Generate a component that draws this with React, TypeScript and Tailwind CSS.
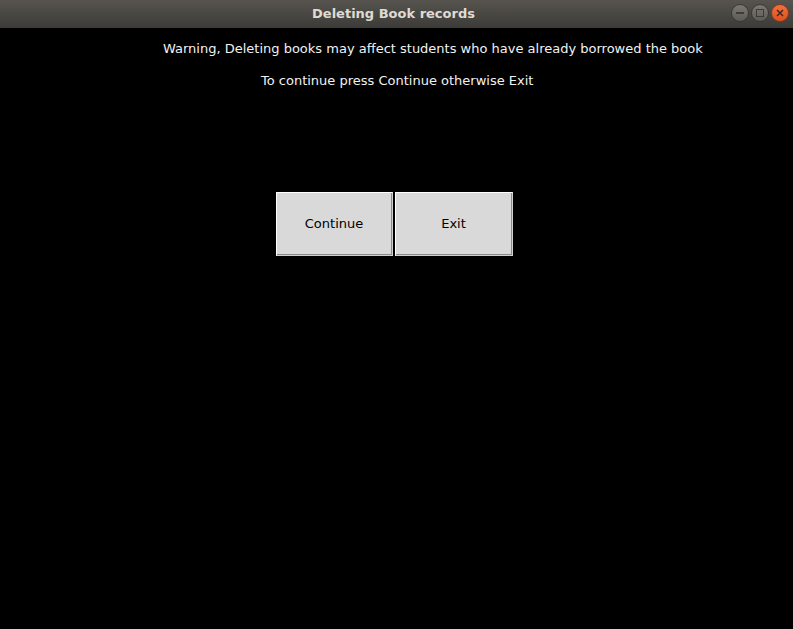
export default function App() {
  return (
    <div className="w-[793px] h-[629px] bg-black flex flex-col overflow-hidden">
      <div className="h-[28px] shrink-0 flex items-center relative bg-gradient-to-b from-[#57544f] to-[#3c3b37]">
        <div className="flex-1 text-center text-[13px] font-bold text-[#dfdbd2] pr-[6px]" style={{ fontFamily: '"DejaVu Sans", sans-serif' }}>
          Deleting Book records
        </div>
        <div className="absolute right-[4px] top-[4px] flex gap-[2px]">
          <div className="w-[18px] h-[18px] rounded-full bg-gradient-to-b from-[#7a7873] to-[#5c5b57] border border-[#3a3935] flex items-center justify-center">
            <div className="w-[8px] h-[2px] bg-[#3c3b37]" />
          </div>
          <div className="w-[18px] h-[18px] rounded-full bg-gradient-to-b from-[#7a7873] to-[#5c5b57] border border-[#3a3935] flex items-center justify-center">
            <div className="w-[8px] h-[8px] border-[1.5px] border-[#3c3b37]" />
          </div>
          <div className="w-[18px] h-[18px] rounded-full bg-gradient-to-b from-[#f0703f] to-[#e0501e] border border-[#8a3a1a] flex items-center justify-center">
            <svg width="8" height="8" viewBox="0 0 8 8">
              <path d="M1 1 L7 7 M7 1 L1 7" stroke="#3c2a20" strokeWidth="1.5" />
            </svg>
          </div>
        </div>
      </div>
      <div className="flex flex-col text-[#f2f2f2] text-[13px]" style={{ fontFamily: '"DejaVu Sans", sans-serif' }}>
        <div className="pl-[163px] pt-[12px] leading-[18px] whitespace-nowrap">
          Warning, Deleting books may affect students who have already borrowed the book
        </div>
        <div className="pl-[261px] pt-[14px] leading-[18px] whitespace-nowrap">
          To continue press Continue otherwise Exit
        </div>
        <div className="pl-[276px] pt-[102px] flex gap-[2px]">
          {[
            ["Continue", "w-[117px]"],
            ["Exit", "w-[118px]"],
          ].map(([label, w]) => (
            <div
              key={label}
              className={`${w} h-[64px] border border-t-white border-l-white border-b-[#d0d0d0] border-r-[#d0d0d0]`}
            >
              <div className="w-full h-full bg-[#d9d9d9] border-b border-r border-[#8a8a8a] border-t-[#d9d9d9] border-l-[#d9d9d9] flex items-center justify-center text-black text-[13px]">
                {label}
              </div>
            </div>
          ))}
        </div>
      </div>
    </div>
  );
}
